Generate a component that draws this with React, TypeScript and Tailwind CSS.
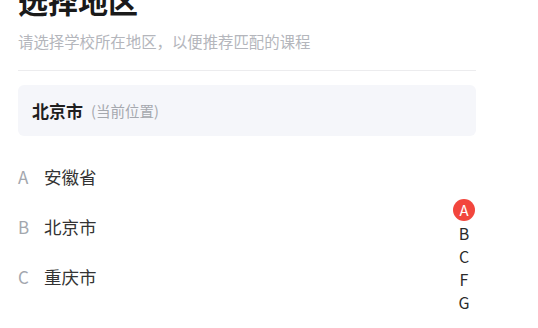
const provinces = [
  { letter: 'A', name: '安徽省' },
  { letter: 'B', name: '北京市' },
  { letter: 'C', name: '重庆市' },
]

const indexLetters = ['A', 'B', 'C', 'F', 'G']

const font = { fontFamily: '"Noto Sans CJK SC", "Noto Sans", sans-serif' }

export default function App() {
  return (
    <div className="relative h-[328px] w-[538px] overflow-hidden bg-white" style={font}>
      <div className="w-[458px] ml-[18px]">
        <h1 className="-mt-[20px] text-[30px] leading-[40px] font-bold text-[#1a1a1a]">选择地区</h1>
        <p className="mt-[11px] text-[15.4px] leading-[20px] text-[#b4b6bc]">请选择学校所在地区，以便推荐匹配的课程</p>
        <div className="mt-[19px] h-px bg-[#ececee]" />
        <div className="mt-[14px] flex h-[51px] items-center gap-2 rounded-md bg-[#f5f6fa] px-[14px]">
          <span className="text-[17px] font-bold text-[#1f1f1f]">北京市</span>
          <span className="text-[14.5px] text-[#a5a8ae]">(当前位置)</span>
        </div>
        <ul className="mt-[16px]">
          {provinces.map(({ letter, name }) => (
            <li key={letter} className="flex h-[50px] items-center">
              <span className="w-[26px] text-[17px] text-[#a3a7ae]">{letter}</span>
              <span className="text-[17.5px] text-[#333333]">{name}</span>
            </li>
          ))}
        </ul>
      </div>
      <div className="absolute left-[453px] top-[199px] flex w-[22px] flex-col items-center">
        {indexLetters.map((l, i) => (
          <span
            key={l}
            className={
              i === 0
                ? 'flex h-[22px] w-[22px] items-center justify-center rounded-full bg-[#f2463d] text-[15px] text-white'
                : 'flex h-[23px] items-center justify-center text-[16px] text-[#2b2b2b]'
            }
          >
            {l}
          </span>
        ))}
      </div>
    </div>
  )
}
